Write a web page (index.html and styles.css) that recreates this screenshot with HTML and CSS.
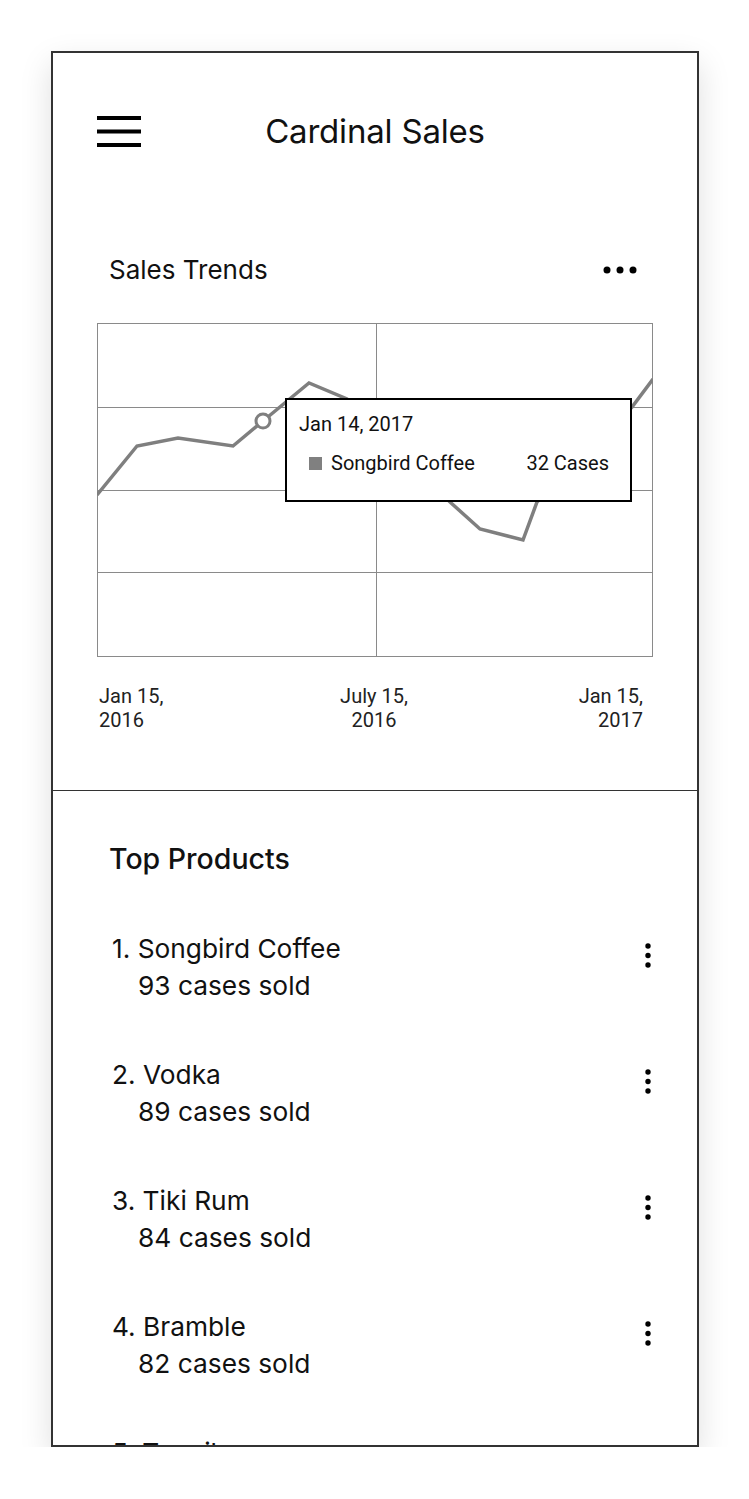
FILE: index.html
```html
<!DOCTYPE html>
<html lang="en">
<head>
<meta charset="utf-8">
<title>Cardinal Sales</title>
<link rel="stylesheet" href="styles.css">
</head>
<body>
<div class="device">
  <header class="app-header">
    <div class="menu">
      <svg width="44" height="31" viewBox="0 0 44 31"><rect x="0" y="0" width="44" height="4" fill="#000"/><rect x="0" y="13.5" width="44" height="4" fill="#000"/><rect x="0" y="27" width="44" height="4" fill="#000"/></svg>
    </div>
    <h1 class="app-title">Cardinal Sales</h1>
    <div></div>
  </header>

  <section class="trends">
    <div class="trends-head">
      <h2 class="trends-title">Sales Trends</h2>
      <svg class="more" width="34" height="8" viewBox="0 0 34 8"><circle cx="4" cy="4" r="3.5" fill="#000"/><circle cx="17" cy="4" r="3.5" fill="#000"/><circle cx="30" cy="4" r="3.5" fill="#000"/></svg>
    </div>
    <div class="chart">
      <svg width="556" height="334" viewBox="0 0 556 334">
        <g stroke="#8a8a8a" stroke-width="1" fill="none">
          <line x1="0" y1="0.5" x2="556" y2="0.5"/>
          <line x1="0" y1="84.5" x2="556" y2="84.5"/>
          <line x1="0" y1="167.5" x2="556" y2="167.5"/>
          <line x1="0" y1="249.5" x2="556" y2="249.5"/>
          <line x1="0" y1="333.5" x2="556" y2="333.5"/>
          <line x1="0.5" y1="0" x2="0.5" y2="334"/>
          <line x1="279.5" y1="0" x2="279.5" y2="334"/>
          <line x1="555.5" y1="0" x2="555.5" y2="334"/>
        </g>
        <polyline points="0,172 40,123 81,115 136,123 166,98 212,60 250,76 353,179 383,206 426,217 440,179 535,84 556,56" fill="none" stroke="#7f7f7f" stroke-width="3.5" stroke-linejoin="miter"/>
        <circle cx="166" cy="98" r="7" fill="#fff" stroke="#7f7f7f" stroke-width="3"/>
      </svg>
      <div class="tooltip">
        <div class="tip-date">Jan 14, 2017</div>
        <div class="tip-row">
          <span class="swatch"></span>
          <span class="tip-name">Songbird Coffee</span>
          <span class="tip-val">32 Cases</span>
        </div>
      </div>
    </div>
    <div class="axis">
      <div class="ax-left">Jan 15,<br>2016</div>
      <div class="ax-mid">July 15,<br>2016</div>
      <div class="ax-right">Jan 15,<br>2017</div>
    </div>
  </section>

  <section class="products">
    <h2 class="products-title">Top Products</h2>
    <ul class="plist">
      <li class="pitem">
        <div class="ptext"><div class="pname">1. Songbird Coffee</div><div class="psold">93 cases sold</div></div>
        <svg class="kebab" width="6" height="25" viewBox="0 0 6 25"><circle cx="3" cy="3" r="2.7" fill="#000"/><circle cx="3" cy="12.5" r="2.7" fill="#000"/><circle cx="3" cy="22" r="2.7" fill="#000"/></svg>
      </li>
      <li class="pitem">
        <div class="ptext"><div class="pname">2. Vodka</div><div class="psold">89 cases sold</div></div>
        <svg class="kebab" width="6" height="25" viewBox="0 0 6 25"><circle cx="3" cy="3" r="2.7" fill="#000"/><circle cx="3" cy="12.5" r="2.7" fill="#000"/><circle cx="3" cy="22" r="2.7" fill="#000"/></svg>
      </li>
      <li class="pitem">
        <div class="ptext"><div class="pname">3. Tiki Rum</div><div class="psold">84 cases sold</div></div>
        <svg class="kebab" width="6" height="25" viewBox="0 0 6 25"><circle cx="3" cy="3" r="2.7" fill="#000"/><circle cx="3" cy="12.5" r="2.7" fill="#000"/><circle cx="3" cy="22" r="2.7" fill="#000"/></svg>
      </li>
      <li class="pitem">
        <div class="ptext"><div class="pname">4. Bramble</div><div class="psold">82 cases sold</div></div>
        <svg class="kebab" width="6" height="25" viewBox="0 0 6 25"><circle cx="3" cy="3" r="2.7" fill="#000"/><circle cx="3" cy="12.5" r="2.7" fill="#000"/><circle cx="3" cy="22" r="2.7" fill="#000"/></svg>
      </li>
      <li class="pitem">
        <div class="ptext"><div class="pname">5. Tequila</div><div class="psold">79 cases sold</div></div>
        <svg class="kebab" width="6" height="25" viewBox="0 0 6 25"><circle cx="3" cy="3" r="2.7" fill="#000"/><circle cx="3" cy="12.5" r="2.7" fill="#000"/><circle cx="3" cy="22" r="2.7" fill="#000"/></svg>
      </li>
    </ul>
  </section>
</div>
</body>
</html>
```

FILE: styles.css
```css
* { box-sizing: border-box; }
html, body { margin: 0; padding: 0; background: #fff; }
body { font-family: Inter, "Noto Sans", sans-serif; color: #111; }

.device {
  margin: 51px 0 0 51px;
  width: 648px;
  height: 1396px;
  border: 2px solid #333;
  overflow: hidden;
  background: #fff;
  box-shadow: 0 12px 30px rgba(0,0,0,0.13);
}

.app-header {
  padding-top: 56px;
  height: 100px;
  display: grid;
  grid-template-columns: 1fr auto 1fr;
  align-items: center;
}
.menu { padding-left: 44px; display: flex; align-items: center; height: 44px; }
.menu svg { display: block; }
.app-title {
  margin: 0;
  font-size: 33px;
  font-weight: 400;
  line-height: 44px;
  color: #111;
  letter-spacing: -0.2px;
}

.trends {
  padding-top: 102px;
  padding-bottom: 58px;
  border-bottom: 1px solid #333;
}
.trends-head {
  display: flex;
  justify-content: space-between;
  align-items: center;
  height: 30px;
  padding: 0 60px 0 56px;
}
.trends-title { margin: 0; font-size: 26px; font-weight: 400; line-height: 30px; color: #111; }
.more { display: block; }

.chart {
  position: relative;
  margin: 38px 0 0 44px;
  width: 556px;
  height: 334px;
}
.chart > svg { display: block; }
.tooltip {
  position: absolute;
  left: 188px;
  top: 75px;
  width: 347px;
  height: 104px;
  border: 2px solid #000;
  background: #fff;
  padding: 12px 21px 0 12px;
  font-family: Roboto, "Liberation Sans", sans-serif;
  font-size: 20px;
  color: #111;
}
.tip-date { line-height: 24px; }
.tip-row {
  display: flex;
  align-items: center;
  margin-top: 15px;
  padding-left: 10px;
  line-height: 24px;
}
.swatch { width: 13px; height: 13px; background: #808080; margin-right: 9px; }
.tip-name { flex: 1; }

.axis {
  margin-top: 27px;
  padding: 0 54px 0 46px;
  display: grid;
  grid-template-columns: 1fr 1fr 1fr;
  font-family: Roboto, "Liberation Sans", sans-serif;
  font-size: 20px;
  line-height: 24px;
  color: #222;
}
.ax-mid { text-align: center; padding-left: 6px; }
.ax-right { text-align: right; }

.products { padding-top: 52px; }
.products-title {
  margin: 0;
  padding-left: 56px;
  font-size: 28.5px;
  font-weight: 500;
  line-height: 32px;
  color: #111;
}
.plist {
  list-style: none;
  margin: 55px 0 0 0;
  padding: 0;
  display: flex;
  flex-direction: column;
  gap: 52px;
}
.pitem {
  display: flex;
  justify-content: space-between;
  align-items: flex-start;
  padding: 0 46px 0 59px;
}
.ptext { font-size: 26.3px; line-height: 37px; color: #111; }
.psold { padding-left: 26px; }
.kebab { display: block; margin-top: 13px; }
```
